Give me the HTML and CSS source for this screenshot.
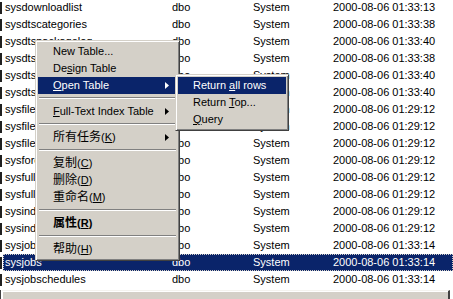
FILE: index.html
```html
<!DOCTYPE html>
<html>
<head>
    <title>Tables</title>
    <link rel="stylesheet" href="styles.css">
</head>
<body>
    <div class="table-list">
        <div class="row"><span class="icon"></span><div class="cells"><span>sysdownloadlist</span><span>dbo</span><span>System</span><span>2000-08-06 01:33:13</span></div></div>
        <div class="row"><span class="icon"></span><div class="cells"><span>sysdtscategories</span><span>dbo</span><span>System</span><span>2000-08-06 01:33:38</span></div></div>
        <div class="row"><span class="icon"></span><div class="cells"><span>sysdtspackagelog</span><span>dbo</span><span>System</span><span>2000-08-06 01:33:40</span></div></div>
        <div class="row"><span class="icon"></span><div class="cells"><span>sysdtspackages</span><span>dbo</span><span>System</span><span>2000-08-06 01:33:38</span></div></div>
        <div class="row"><span class="icon"></span><div class="cells"><span>sysdtssteplog</span><span>dbo</span><span>System</span><span>2000-08-06 01:33:40</span></div></div>
        <div class="row"><span class="icon"></span><div class="cells"><span>sysdtstasklog</span><span>dbo</span><span>System</span><span>2000-08-06 01:33:40</span></div></div>
        <div class="row"><span class="icon"></span><div class="cells"><span>sysfilegroups</span><span>dbo</span><span>System</span><span>2000-08-06 01:29:12</span></div></div>
        <div class="row"><span class="icon"></span><div class="cells"><span>sysfiles</span><span>dbo</span><span>System</span><span>2000-08-06 01:29:12</span></div></div>
        <div class="row"><span class="icon"></span><div class="cells"><span>sysfiles1</span><span>dbo</span><span>System</span><span>2000-08-06 01:29:12</span></div></div>
        <div class="row"><span class="icon"></span><div class="cells"><span>sysforeignkeys</span><span>dbo</span><span>System</span><span>2000-08-06 01:29:12</span></div></div>
        <div class="row"><span class="icon"></span><div class="cells"><span>sysfulltextcatalogs</span><span>dbo</span><span>System</span><span>2000-08-06 01:29:12</span></div></div>
        <div class="row"><span class="icon"></span><div class="cells"><span>sysfulltextnotify</span><span>dbo</span><span>System</span><span>2000-08-06 01:29:12</span></div></div>
        <div class="row"><span class="icon"></span><div class="cells"><span>sysindexes</span><span>dbo</span><span>System</span><span>2000-08-06 01:29:12</span></div></div>
        <div class="row"><span class="icon"></span><div class="cells"><span>sysindexkeys</span><span>dbo</span><span>System</span><span>2000-08-06 01:29:12</span></div></div>
        <div class="row"><span class="icon"></span><div class="cells"><span>sysjobhistory</span><span>dbo</span><span>System</span><span>2000-08-06 01:33:14</span></div></div>
        <div class="row selected"><span class="icon"></span><div class="cells"><span>sysjobs</span><span>dbo</span><span>System</span><span>2000-08-06 01:33:14</span></div></div>
        <div class="row"><span class="icon"></span><div class="cells"><span>sysjobschedules</span><span>dbo</span><span>System</span><span>2000-08-06 01:33:14</span></div></div>
    </div>
    <div class="scrollbar">
        <div class="thumb"></div>
    </div>

    <!-- context menu -->
    <div class="menu main-menu">
        <div class="item">New Table...</div>
        <div class="item">De<u>s</u>ign Table</div>
        <div class="item active"><u>O</u>pen Table<svg class="arrow" width="4" height="7" viewBox="0 0 4 7"><path d="M0 0L4 3.5L0 7Z"/></svg></div>
        <div class="sep"></div>
        <div class="item"><u>F</u>ull-Text Index Table<svg class="arrow" width="4" height="7" viewBox="0 0 4 7"><path d="M0 0L4 3.5L0 7Z"/></svg></div>
        <div class="sep"></div>
        <div class="item"><span class="cjk">所有任务</span>(<u>K</u>)<svg class="arrow" width="4" height="7" viewBox="0 0 4 7"><path d="M0 0L4 3.5L0 7Z"/></svg></div>
        <div class="sep"></div>
        <div class="item"><span class="cjk">复制</span>(<u>C</u>)</div>
        <div class="item"><span class="cjk">删除</span>(<u>D</u>)</div>
        <div class="item"><span class="cjk">重命名</span>(<u>M</u>)</div>
        <div class="sep"></div>
        <div class="item bold"><span class="cjk">属性</span>(<u>R</u>)</div>
        <div class="sep"></div>
        <div class="item"><span class="cjk">帮助</span>(<u>H</u>)</div>
    </div>

    <div class="menu sub-menu">
        <div class="item active">Return <u>a</u>ll rows</div>
        <div class="item">Return <u>T</u>op...</div>
        <div class="item"><u>Q</u>uery</div>
    </div>
</body>
</html>
```

FILE: styles.css
```css
body {
    margin: 0;
    width: 453px;
    height: 299px;
    overflow: hidden;
    background: #ffffff;
    font-family: "Liberation Sans", "Noto Sans CJK SC", sans-serif;
    font-size: 11px;
    color: #000000;
    position: relative;
}

.table-list {
    margin-top: -1px;
}

.row {
    display: flex;
    height: 17px;
    line-height: 17px;
}

.icon {
    width: 3px;
    flex-shrink: 0;
    position: relative;
}

.icon::before {
    content: "";
    display: block;
    width: 2px;
    height: 12px;
    margin-top: 3px;
    background: #202020;
}

.cells {
    flex: 1;
    display: grid;
    grid-template-columns: 167px 81px 80px 1fr;
    padding-left: 2px;
    white-space: nowrap;
}

.row.selected .cells {
    background: #0a246a;
    color: #ffffff;
    outline: 1px dotted #d4d0c8;
    outline-offset: -1px;
}

.scrollbar {
    margin-top: 2px;
    height: 12px;
    padding-left: 1px;
    padding-right: 3px;
    border-left: 1px solid #404040;
}

.thumb {
    height: 100%;
    background: #d4d0c8;
    border-top: 1px solid #f4f3ef;
    border-right: 2px solid #404040;
    box-shadow: inset 1px 1px #ffffff;
}

/* menus */
.menu {
    position: absolute;
    background: #d4d0c8;
    border: 1px solid;
    border-color: #d4d0c8 #404040 #404040 #d4d0c8;
    box-shadow: inset 1px 1px #ffffff, inset -1px -1px #808080;
    padding: 2px;
}

.main-menu {
    left: 35px;
    top: 40px;
    width: 139px;
}

.sub-menu {
    left: 175px;
    top: 74px;
    width: 108px;
}

.item {
    height: 17px;
    line-height: 17px;
    padding-left: 15px;
    position: relative;
    white-space: nowrap;
}

.item.active {
    background: #0a246a;
    color: #ffffff;
}

.item.bold {
    font-weight: bold;
}

.cjk {
    font-size: 12px;
}

.arrow {
    position: absolute;
    right: 8px;
    top: 5px;
    fill: #000000;
}

.item.active .arrow {
    fill: #ffffff;
}

.sep {
    height: 9px;
    position: relative;
}

.sep::before {
    content: "";
    position: absolute;
    left: 1px;
    right: 1px;
    top: 3px;
    border-top: 1px solid #808080;
    border-bottom: 1px solid #ffffff;
}
```
